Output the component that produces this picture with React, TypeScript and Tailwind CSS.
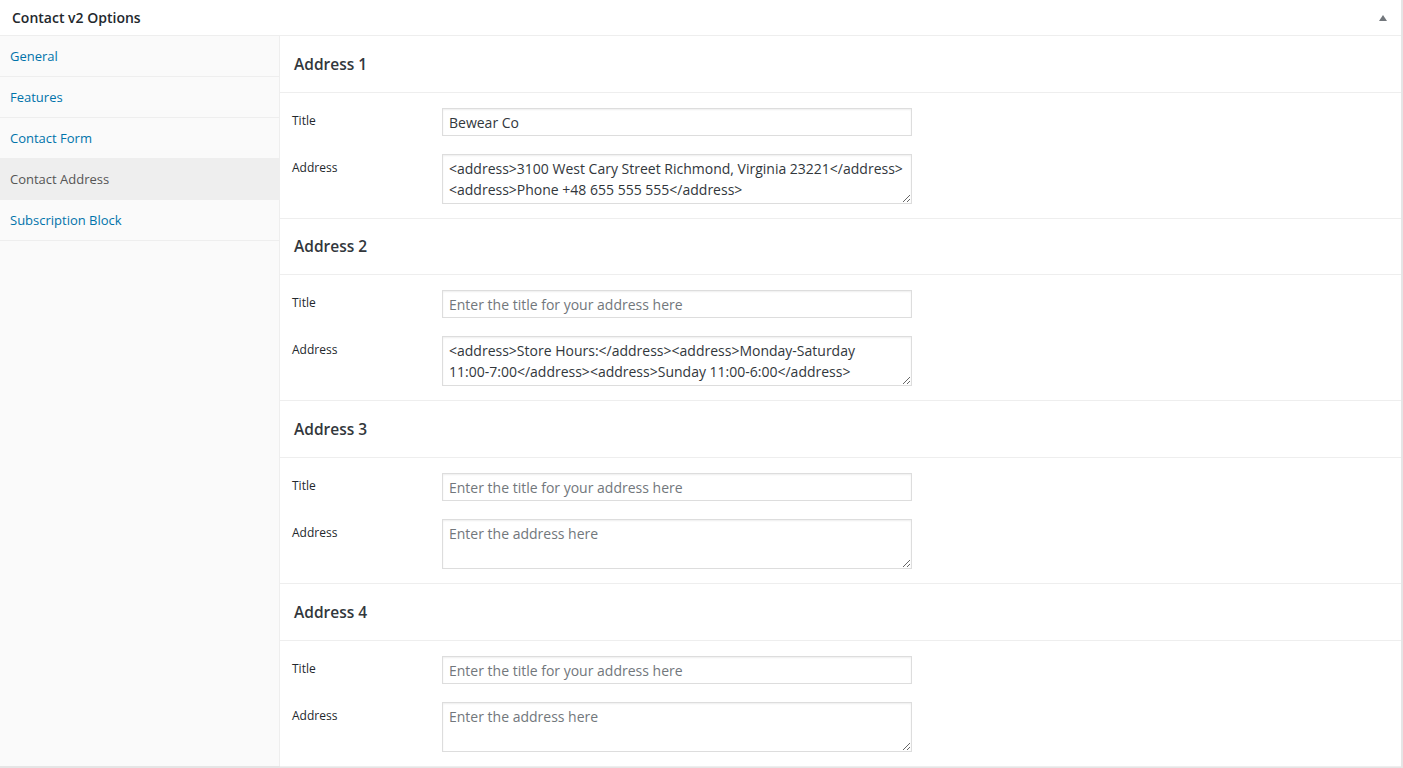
import React from 'react';

const navItems = ['General', 'Features', 'Contact Form', 'Contact Address', 'Subscription Block'];

interface AddressBlock {
  heading: string;
  title: string;
  address: string;
}

const blocks: AddressBlock[] = [
  {
    heading: 'Address 1',
    title: 'Bewear Co',
    address:
      '<address>3100 West Cary Street Richmond, Virginia 23221</address>\n<address>Phone +48 655 555 555</address>',
  },
  {
    heading: 'Address 2',
    title: '',
    address:
      '<address>Store Hours:</address><address>Monday-Saturday\n11:00-7:00</address><address>Sunday 11:00-6:00</address>',
  },
  { heading: 'Address 3', title: '', address: '' },
  { heading: 'Address 4', title: '', address: '' },
];

const fieldClass =
  'w-[470px] border border-[#ddd] bg-white px-[6px] text-[14px] text-[#32373c] placeholder:text-[#72777c] shadow-[inset_0_1px_2px_rgba(0,0,0,0.07)] outline-none';

const Section = ({ block, short }: { block: AddressBlock; short?: boolean }) => (
  <div className="border-b border-[#eee]">
    <div
      className={`${short ? 'h-[56px]' : 'h-[57px]'} border-b border-[#eee] flex items-center pl-[14px] pt-[1px]`}
    >
      <h3 className="text-[15.5px] font-semibold text-[#32373c]">{block.heading}</h3>
    </div>
    <div className="pt-[15px] pb-[14px]">
      <div className="flex">
        <label className="w-[162px] pl-[12px] pt-[4px] text-[12px] text-[#23282d]">Title</label>
        <input
          className={`${fieldClass} h-[28px]`}
          defaultValue={block.title}
          placeholder="Enter the title for your address here"
        />
      </div>
      <div className="flex mt-[18px]">
        <label className="w-[162px] pl-[12px] pt-[5px] text-[12px] text-[#23282d]">Address</label>
        <textarea
          className={`${fieldClass} h-[50px] pt-[3px] pb-[1px] leading-[21px] overflow-hidden`}
          defaultValue={block.address}
          placeholder="Enter the address here"
        />
      </div>
    </div>
  </div>
);

export default function App() {
  return (
    <div
      className="w-[1403px] h-[768px] bg-white border-r-2 border-b-2 border-[#e5e5e5] flex flex-col"
      style={{ fontFamily: '"Open Sans", "Liberation Sans", sans-serif' }}
    >
      <div className="h-[36px] shrink-0 border-b border-[#eee] flex items-center justify-between pl-[12px] pr-[14px]">
        <h2 className="text-[14px] font-semibold text-[#23282d]">Contact v2 Options</h2>
        <svg width="8" height="6" viewBox="0 0 8 6">
          <path d="M4 0 L8 6 L0 6 Z" fill="#72777c" />
        </svg>
      </div>
      <div className="flex flex-1 min-h-0">
        <ul className="w-[280px] shrink-0 bg-[#fafafa] border-r border-[#eee]">
          {navItems.map((item) => (
            <li
              key={item}
              className={`h-[41px] border-b border-[#eee] flex items-center pl-[10px] pt-[1px] text-[13px] ${
                item === 'Contact Address' ? 'bg-[#eee] text-[#555]' : 'text-[#0073aa]'
              }`}
            >
              {item}
            </li>
          ))}
        </ul>
        <div className="flex-1">
          {blocks.map((b, i) => (
            <Section key={b.heading} block={b} short={i === 1} />
          ))}
        </div>
      </div>
    </div>
  );
}
